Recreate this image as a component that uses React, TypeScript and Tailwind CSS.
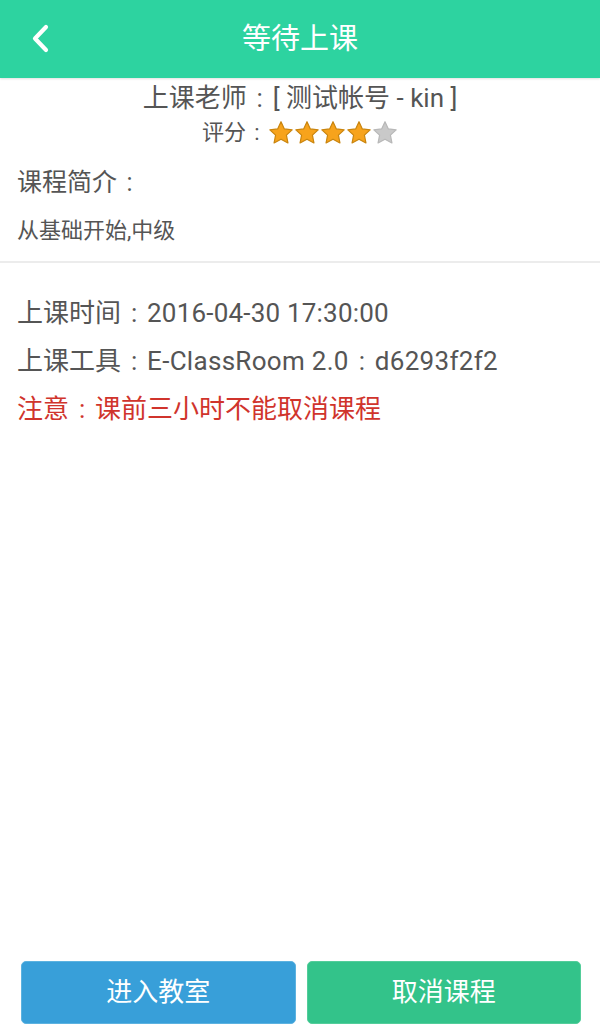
const font = { fontFamily: 'Roboto, "Noto Sans CJK SC", sans-serif' };

// centred colon, one em wide, like the full-width colon in the screenshot
function Colon() {
  return <span className="px-[0.38em]">:</span>;
}

function Star({ on }: { on: boolean }) {
  return (
    <svg viewBox="0 0 24 24" className="h-[26px] w-[26px]">
      <path
        d="M12 1.6l3.1 6.6 7.2.9-5.3 4.9 1.4 7.2L12 17.7l-6.4 3.5 1.4-7.2-5.3-4.9 7.2-.9z"
        fill={on ? '#f7a31c' : '#c9c9c9'}
        stroke={on ? '#c9850f' : '#b8b8b8'}
        strokeWidth="1.1"
        strokeLinejoin="round"
      />
    </svg>
  );
}

export default function App() {
  const score = 4;
  return (
    <div className="relative flex h-[1027px] w-[600px] flex-col bg-white text-[#555]" style={font}>
      <header className="relative flex h-[78px] shrink-0 items-center justify-center bg-[#2dd3a0] shadow-[0_1px_2px_rgba(0,0,0,0.12)]">
        <svg viewBox="0 0 80 78" className="absolute left-0 top-0 h-[78px] w-[80px]">
          <polyline points="46,27 35,38.5 46,50" fill="none" stroke="white" strokeWidth="4.2" strokeLinecap="round" strokeLinejoin="round" />
        </svg>
        <h1 className="text-[29px] font-normal leading-none text-white">等待上课</h1>
      </header>

      <div className="mt-[5px] text-center text-[26px] leading-[30px]">
        上课老师<Colon />[ 测试帐号 - kin ]
      </div>
      <div className="mt-[5px] flex items-center justify-center text-[22px] leading-[30px]">
        <span>评分<Colon /></span>
        <div className="flex">
          {[0, 1, 2, 3, 4].map((i) => (
            <Star key={i} on={i < score} />
          ))}
        </div>
      </div>

      <div className="px-[17px] pb-[16px]">
        <div className="mt-[20px] text-[25px] leading-[30px]">课程简介<Colon /></div>
        <div className="mt-[19px] text-[22px] leading-[28px]">从基础开始,中级</div>
      </div>
      <div className="h-[2px] bg-[#ececec]" />

      <div className="flex flex-col gap-[18px] px-[17px] pt-[35px] text-[26px] leading-[30px]">
        <div>上课时间<Colon /><span className="tracking-[0.2px]">2016-04-30 17:30:00</span></div>
        <div>上课工具<Colon /><span className="tracking-[0.3px]">E-ClassRoom 2.0</span><Colon /><span className="tracking-[0.3px]">d6293f2f2</span></div>
        <div className="text-[#d0342c]">注意<Colon />课前三小时不能取消课程</div>
      </div>

      <div className="mt-auto flex gap-[11px] pb-[3px] pl-[21px] pr-[19px]">
        <button className="flex h-[63px] flex-1 items-center justify-center rounded-[5px] border border-[#5cb2e0] bg-[#389fd9] text-[26px] text-white">
          进入教室
        </button>
        <button className="flex h-[63px] flex-1 items-center justify-center rounded-[5px] border border-[#53cd9a] bg-[#33c38a] text-[26px] text-white">
          取消课程
        </button>
      </div>
    </div>
  );
}
